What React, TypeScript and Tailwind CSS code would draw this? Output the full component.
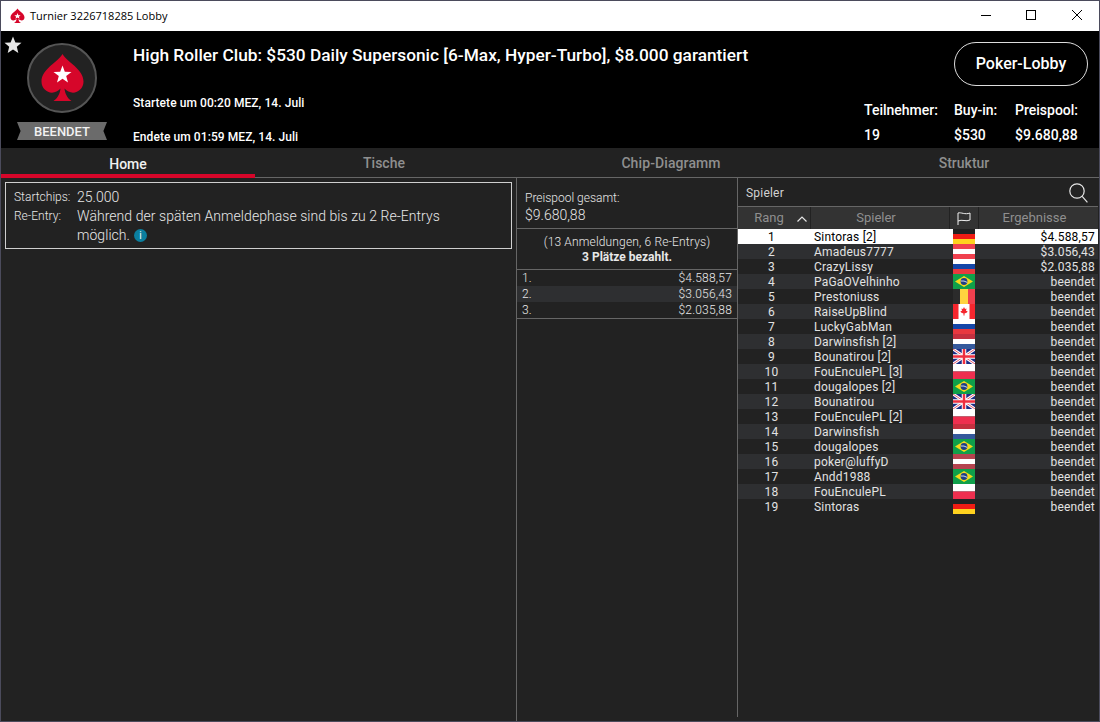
type Country = "de" | "at" | "ru" | "br" | "ro" | "ca" | "nl" | "gb" | "pl" | "hu";

const players: { name: string; country: Country; result: string }[] = [
  { name: "Sintoras [2]", country: "de", result: "$4.588,57" },
  { name: "Amadeus7777", country: "at", result: "$3.056,43" },
  { name: "CrazyLissy", country: "ru", result: "$2.035,88" },
  { name: "PaGaOVelhinho", country: "br", result: "beendet" },
  { name: "Prestoniuss", country: "ro", result: "beendet" },
  { name: "RaiseUpBlind", country: "ca", result: "beendet" },
  { name: "LuckyGabMan", country: "ru", result: "beendet" },
  { name: "Darwinsfish [2]", country: "nl", result: "beendet" },
  { name: "Bounatirou [2]", country: "gb", result: "beendet" },
  { name: "FouEnculePL [3]", country: "pl", result: "beendet" },
  { name: "dougalopes [2]", country: "br", result: "beendet" },
  { name: "Bounatirou", country: "gb", result: "beendet" },
  { name: "FouEnculePL [2]", country: "pl", result: "beendet" },
  { name: "Darwinsfish", country: "nl", result: "beendet" },
  { name: "dougalopes", country: "br", result: "beendet" },
  { name: "poker@luffyD", country: "hu", result: "beendet" },
  { name: "Andd1988", country: "br", result: "beendet" },
  { name: "FouEnculePL", country: "pl", result: "beendet" },
  { name: "Sintoras", country: "de", result: "beendet" },
];

const payouts = [
  { place: "1.", amount: "$4.588,57" },
  { place: "2.", amount: "$3.056,43" },
  { place: "3.", amount: "$2.035,88" },
];

const stripes: Partial<Record<Country, string[]>> = {
  de: ["#222222", "#f01c14", "#ffd21f"],
  at: ["#f0404e", "#ffffff", "#f0404e"],
  ru: ["#ffffff", "#1446a8", "#e8383f"],
  nl: ["#c4303f", "#ffffff", "#35599c"],
  pl: ["#ffffff", "#ee2f4f"],
  hu: ["#b5434f", "#ffffff", "#b5434f"],
};

function Flag({ country }: { country: Country }) {
  const bands = stripes[country];
  return (
    <svg width="22" height="15" viewBox="0 0 22 15" className="block">
      {bands &&
        bands.map((color, i) => (
          <rect
            key={i}
            x="0"
            y={(i * 15) / bands.length}
            width="22"
            height={15 / bands.length}
            fill={color}
          />
        ))}
      {country === "br" && (
        <>
          <rect width="22" height="15" fill="#0fa04a" />
          <polygon points="11,2 20,7.5 11,13 2,7.5" fill="#f5d91c" />
          <circle cx="11" cy="7.5" r="3.4" fill="#1f3f85" />
          <path d="M7.8 7 Q11 6.4 14.2 8.4" stroke="#ffffff" strokeWidth="0.8" fill="none" />
        </>
      )}
      {country === "ro" && (
        <>
          <rect width="7" height="15" fill="#2b2b2b" />
          <rect x="7" width="8" height="15" fill="#ffd23f" />
          <rect x="15" width="7" height="15" fill="#f0404e" />
        </>
      )}
      {country === "ca" && (
        <>
          <rect width="22" height="15" fill="#ffffff" />
          <rect width="5.5" height="15" fill="#f5262e" />
          <rect x="16.5" width="5.5" height="15" fill="#f5262e" />
          <polygon
            points="11,3 12,5 13.5,4.6 13,7 14.5,7 14,8.5 11.5,9.6 11.5,11.5 10.5,11.5 10.5,9.6 8,8.5 7.5,7 9,7 8.5,4.6 10,5"
            fill="#f5262e"
          />
        </>
      )}
      {country === "gb" && (
        <>
          <rect width="22" height="15" fill="#1c2d87" />
          <path d="M0 0 L22 15 M22 0 L0 15" stroke="#ffffff" strokeWidth="3" />
          <path d="M0 0 L22 15 M22 0 L0 15" stroke="#e8596c" strokeWidth="1" />
          <path d="M11 0 V15 M0 7.5 H22" stroke="#ffffff" strokeWidth="4.5" />
          <path d="M11 0 V15 M0 7.5 H22" stroke="#ee2f3f" strokeWidth="2.5" />
        </>
      )}
    </svg>
  );
}

function SpadeLogo() {
  return (
    <svg width="70" height="70" viewBox="0 0 70 70" className="block">
      <circle cx="35" cy="35" r="34" fill="#222222" stroke="#555555" strokeWidth="2" />
      <path
        d="M35.5 11 C40 19 56.5 26 56.5 38.5 C56.5 47 48 52 41.5 48.5 C39.5 47.5 38.5 46.5 37.5 45.5 C38 50 40 55 44.5 58 L26.5 58 C31 55 33 50 33.5 45.5 C32.5 46.5 31.5 47.5 29.5 48.5 C23 52 14.5 47 14.5 38.5 C14.5 26 31 19 35.5 11 Z"
        fill="#d6062a"
      />
      <polygon
        points="35.5,22.5 37.8,28.8 44.5,29 39.2,33.1 41,39.5 35.5,35.8 30,39.5 31.8,33.1 26.5,29 33.2,28.8"
        fill="#ffffff"
      />
    </svg>
  );
}

function FlagHeaderIcon() {
  return (
    <svg width="14" height="13" viewBox="0 0 14 13" fill="none" stroke="#f0f0f0" strokeWidth="1" className="block">
      <path d="M1 13 V1 C4 0 8 3 13 1 V8 C9 10 5 7 1 9" />
    </svg>
  );
}

function SearchIcon() {
  return (
    <svg width="19" height="20" viewBox="0 0 19 20" fill="none" stroke="#e6e6e6" strokeWidth="1.2" className="block">
      <circle cx="8" cy="8" r="7.2" />
      <path d="M13.2 13.4 L18.4 19.4" />
    </svg>
  );
}

export default function App() {
  return (
    <div
      className="flex h-[722px] w-[1100px] flex-col overflow-hidden border border-[#4b4b5c] bg-[#222222] text-[#d2d2d2]"
      style={{ fontFamily: "Roboto, sans-serif" }}
    >
      {/* title bar */}
      <div className="flex h-[30px] shrink-0 items-center bg-white pl-[9px] text-black">
        <svg width="15" height="16" viewBox="0 0 15 16" className="block">
          <path
            d="M7.5 0.5 C9 3 14.5 5.5 14.5 9.5 C14.5 12 12 13 10 12 C9.3 11.7 8.8 11.3 8.4 11 C8.6 12.5 9.2 14 11 15 L4 15 C5.8 14 6.4 12.5 6.6 11 C6.2 11.3 5.7 11.7 5 12 C3 13 0.5 12 0.5 9.5 C0.5 5.5 6 3 7.5 0.5 Z"
            fill="#d6062a"
          />
          <polygon points="7.5,5 8.4,7.2 10.6,7.3 8.9,8.7 9.5,10.8 7.5,9.6 5.5,10.8 6.1,8.7 4.4,7.3 6.6,7.2" fill="#ffffff" />
        </svg>
        <span className="ml-[5px] text-[11px]" style={{ fontFamily: "'Open Sans', sans-serif" }}>
          Turnier 3226718285 Lobby
        </span>
        <div className="ml-auto flex items-center pb-[2px] pr-[17px] text-black">
          <svg width="10" height="10" viewBox="0 0 10 10" stroke="currentColor" fill="none" shapeRendering="crispEdges" className="block">
            <path d="M0 5.5 H10" />
          </svg>
          <svg width="10" height="10" viewBox="0 0 10 10" stroke="currentColor" fill="none" shapeRendering="crispEdges" className="ml-[35px] block">
            <rect x="0.5" y="0.5" width="9" height="9" />
          </svg>
          <svg width="10" height="10" viewBox="0 0 10 10" stroke="currentColor" fill="none" className="ml-[36px] block">
            <path d="M0 0 L10 10 M10 0 L0 10" />
          </svg>
        </div>
      </div>

      {/* header */}
      <div className="relative flex h-[117px] shrink-0 bg-black text-white">
        <svg width="18" height="18" viewBox="0 0 18 18" className="absolute left-[3px] top-[5px]">
          <polygon points="9,0.5 11.4,6.4 17.5,6.8 12.8,10.8 14.3,17 9,13.6 3.7,17 5.2,10.8 0.5,6.8 6.6,6.4" fill="#e6e6e6" />
        </svg>
        <div className="flex w-[132px] shrink-0 flex-col items-start pl-[16px] pt-[12px]">
          <div className="pl-[10px]">
            <SpadeLogo />
          </div>
          <div
            className="mt-[9px] flex h-[18px] w-[90px] items-center justify-center bg-[#6b6b6b] text-[13px] font-medium leading-none text-[#f2f2f2]"
            style={{ clipPath: "polygon(0 0, 100% 0, 96% 50%, 100% 100%, 0 100%, 4% 50%)" }}
          >
            BEENDET
          </div>
        </div>
        <div className="flex flex-1 flex-col pt-[14px]">
          <div className="whitespace-nowrap text-[17.3px] font-medium leading-5">
            High Roller Club: $530 Daily Supersonic [6-Max, Hyper-Turbo], $8.000 garantiert
          </div>
          <div className="mt-[30px] text-xs font-medium leading-4 tracking-[0.07px]">Startete um 00:20 MEZ, 14. Juli</div>
          <div className="mt-[18px] text-xs font-medium leading-4 tracking-[0.07px]">Endete um 01:59 MEZ, 14. Juli</div>
        </div>
        <div className="flex w-[235px] shrink-0 flex-col">
          <div className="ml-[90px] mt-[11px] flex h-[44px] w-[134px] items-center justify-center rounded-full border border-[#dddddd] text-base font-medium">
            Poker-Lobby
          </div>
          <div className="mt-[16px] flex text-sm font-medium leading-4">
            <div className="flex w-[90px] flex-col gap-[9px]">
              <span>Teilnehmer:</span>
              <span>19</span>
            </div>
            <div className="flex w-[61px] flex-col gap-[9px]">
              <span>Buy-in:</span>
              <span>$530</span>
            </div>
            <div className="flex flex-col gap-[9px]">
              <span>Preispool:</span>
              <span>$9.680,88</span>
            </div>
          </div>
        </div>
      </div>

      {/* tabs */}
      <div className="flex h-[30px] shrink-0 border-b border-[#666666] text-sm font-medium text-[#8f8f8f]">
        <div className="flex h-[30px] w-[254px] items-center justify-center border-b-4 border-[#d6062a] pt-[5px] text-[#f0f0f0]">
          Home
        </div>
        <div className="flex w-[258px] items-center justify-center">Tische</div>
        <div className="flex w-[316px] items-center justify-center tracking-[0.1px]">Chip-Diagramm</div>
        <div className="flex flex-1 items-center justify-center">Struktur</div>
      </div>

      {/* body */}
      <div className="flex min-h-0 flex-1">
        <div className="w-[515px] shrink-0 px-[4px] pt-[4px]">
          <div className="grid grid-cols-[63px_1fr] border border-[#cfcfcf] pb-[3px] pl-[8px] pt-[5px] text-sm font-light leading-[19px] text-[#e8e8e8]">
            <span className="text-xs leading-[19px]">Startchips:</span>
            <span>25.000</span>
            <span className="text-xs leading-[19px]">Re-Entry:</span>
            <div className="tracking-[0.05px]">
              <div>Während der späten Anmeldephase sind bis zu 2 Re-Entrys</div>
              <div className="flex items-center gap-[4px]">
                <span>möglich.</span>
                <span className="flex h-[13px] w-[13px] items-center justify-center rounded-full bg-[#0b7f9f] text-[10px] font-normal leading-none text-white">
                  i
                </span>
              </div>
            </div>
          </div>
        </div>

        <div className="flex w-[221px] shrink-0 flex-col border-l border-[#666666] font-light text-[#e8e8e8]">
          <div className="h-[51px] border-b border-[#666666] px-[8px] pt-[12px]">
            <div className="text-xs leading-4">Preispool gesamt:</div>
            <div className="text-sm leading-[19px]">$9.680,88</div>
          </div>
          <div className="h-[41px] border-b border-[#666666] pt-[6px] text-center text-xs leading-[15px]">
            <div className="tracking-[0.15px]">(13 Anmeldungen, 6 Re-Entrys)</div>
            <div className="font-bold text-[#e8e8e8]">3 Plätze bezahlt.</div>
          </div>
          <div className="border-b border-[#666666]">
            {payouts.map((row, i) => (
              <div
                key={row.place}
                className={`flex h-4 items-center justify-between px-[5px] text-xs tracking-[0.2px] ${
                  i === 1 ? "bg-[#2e2f31]" : ""
                }`}
              >
                <span>{row.place}</span>
                <span>{row.amount}</span>
              </div>
            ))}
          </div>
        </div>

        <div className="mb-[4px] w-px shrink-0 bg-[#666666]" />

        <div className="flex min-w-0 flex-1 flex-col">
          <div className="flex h-[28px] shrink-0 items-center justify-between pl-[8px] pr-[11px] pt-[1px] text-xs tracking-[0.2px]">
            <span>Spieler</span>
            <SearchIcon />
          </div>
          <div className="mr-[1px] flex h-[23px] shrink-0 border-t border-[#666666] bg-[#333333] text-[13px] text-[#8f8f8f]">
            <div className="relative flex w-[72px] items-center justify-center pr-[10px]">
              Rang
              <svg width="10" height="6" viewBox="0 0 10 6" fill="none" stroke="#e6e6e6" strokeWidth="1.2" className="absolute right-[3px] top-[9px]">
                <path d="M0.5 5.5 L5 1 L9.5 5.5" />
              </svg>
            </div>
            <div className="flex w-[139px] items-center justify-center border-l border-[#222222] pr-[8px]">Spieler</div>
            <div className="flex w-[30px] items-center justify-center border-x border-[#222222]">
              <FlagHeaderIcon />
            </div>
            <div className="flex flex-1 items-center justify-center pr-[8px]">Ergebnisse</div>
          </div>
          <div className="mr-[1px]">
            {players.map((p, i) => (
              <div
                key={p.name}
                className={`flex h-[15px] items-center text-xs tracking-[0.2px] ${
                  i === 0 ? "bg-white text-black" : i % 2 === 1 ? "bg-[#2e2f31] text-[#e2e2e2]" : "text-[#e2e2e2]"
                }`}
              >
                <span className="w-[67px] text-center">{i + 1}</span>
                <span className="w-[148px] whitespace-nowrap pl-[9px]">{p.name}</span>
                <div className="w-[22px]">
                  <Flag country={p.country} />
                </div>
                <span className="flex-1 pr-[3px] text-right">{p.result}</span>
              </div>
            ))}
          </div>
        </div>
      </div>
    </div>
  );
}
